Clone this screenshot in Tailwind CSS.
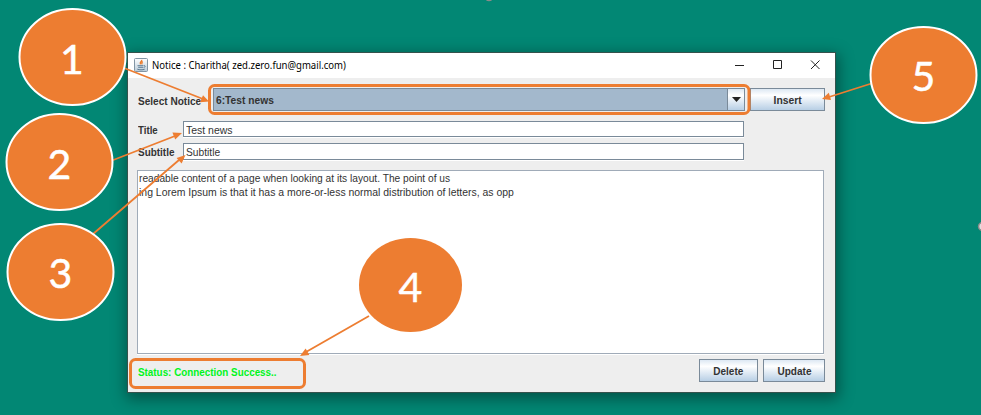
<!DOCTYPE html>
<html lang="en">
<head>
<meta charset="utf-8">
<title>Notice</title>
<script src="https://cdn.jsdelivr.net/npm/@tailwindcss/browser@4"></script>
</head>
<body class="relative w-[981px] h-[415px] overflow-hidden bg-[#028774] font-['Liberation_Sans',Arial,sans-serif] text-[11.5px] leading-[14px] text-[#333]">

<!-- Application window -->
<main class="absolute left-[127px] top-[52px] w-[709px] h-[341px] border border-[#35524c] bg-[#eee] flex flex-col shadow-[1px_4px_14px_2px_rgba(0,0,0,0.38)]">
  <header class="h-[25px] shrink-0 bg-white flex items-center pl-[6px] pb-px text-black">
    <svg class="w-[14px] h-[14px] shrink-0" viewBox="0 0 14 14" fill="none">
      <defs><linearGradient id="ico" x1="0" y1="0" x2="0" y2="1"><stop offset="0" stop-color="#fff"/><stop offset="1" stop-color="#b9cbd9"/></linearGradient></defs>
      <rect x=".5" y=".5" width="13" height="13" rx="1" fill="url(#ico)" stroke="#8295a4"/>
      <path d="M7.600 1.800C8.600 3.300 5 4 6.500 6.300M8.800 3.600C7 4.500 8.500 5 7.600 6.400" stroke="#ec7a28" stroke-width="1.3"/>
      <path d="M3.500 7.700h6M4.200 9.300h4.800M10 7.600c1.800-.2 1.400 1.600-.4 2M3.300 11.200c2 .8 5.400.8 7.400 0" stroke="#5f7d94"/>
    </svg>
    <h1 class="ml-[4px] font-['Noto_Sans',sans-serif] text-[11.5px] origin-left scale-x-[.83] whitespace-pre">Notice : Charitha( zed.zero.fun@gmail.com)</h1>
    <div class="ml-auto flex items-center gap-[28px] pr-[15px]">
      <svg class="w-[10px] h-[10px]" viewBox="0 0 10 10"><path d="M1 5.500h9" stroke="#222"/></svg>
      <svg class="w-[10px] h-[10px]" viewBox="0 0 10 10"><path d="M1.500 .5h8v8h-8z" fill="none" stroke="#222"/></svg>
      <svg class="w-[10px] h-[10px]" viewBox="0 0 10 10"><path d="M1 .5l8.500 8.500M9.500 .5L1 9" stroke="#222"/></svg>
    </div>
  </header>

  <section class="flex flex-col pt-[10px] pl-[9px] pr-[9px]">
    <div class="flex items-center h-[23px] pl-px">
      <label class="w-[75px] pt-[2px] font-bold whitespace-nowrap"><span class="inline-block origin-left scale-x-[.875]">Select Notice</span></label>
      <div class="w-[532px] h-[23px] border border-[#7a8a99] bg-[#a3b8cc] flex">
        <span class="flex-1 pl-[2px] pt-[4px] font-bold"><span class="inline-block origin-left scale-x-[.89]">6:Test news</span></span>
        <span class="w-[17px] border-l border-[#7a8a99] bg-linear-to-b from-[#dde8f3] via-white via-30% to-[#b8cfe5] flex items-center justify-center">
          <svg class="w-[9px] h-[5px]" viewBox="0 0 10 5" preserveAspectRatio="none"><path d="M0 0h10L5 5z" fill="#222"/></svg>
        </span>
      </div>
      <button class="ml-[5px] w-[75px] h-[23px] border border-[#7a8a99] bg-linear-to-b from-[#dde8f3] via-white via-30% to-[#b8cfe5] font-bold"><span class="inline-block scale-x-[.9]">Insert</span></button>
    </div>
    <div class="mt-[10px] flex items-center h-[16px] pl-px">
      <label class="w-[45px] pt-[2px] font-bold"><span class="inline-block origin-left scale-x-[.84]">Title</span></label>
      <div class="w-[561px] h-[16px] border border-[#7a8a99] bg-white pl-[1.5px] pt-px shadow-[0_1px_0_#fff]"><span class="inline-block origin-left scale-x-[.91]">Test news</span></div>
    </div>
    <div class="mt-[6px] flex items-center h-[17px] pl-px">
      <label class="w-[45px] font-bold"><span class="inline-block origin-left scale-x-[.865]">Subtitle</span></label>
      <div class="w-[561px] h-[17px] border border-[#7a8a99] bg-white pl-[1.5px] pt-px shadow-[0_1px_0_#fff]"><span class="inline-block origin-left scale-x-[.89]">Subtitle</span></div>
    </div>
    <div class="mt-[10px] w-[687px] h-[184px] border border-[#a0abb8] bg-white pl-[.5px] pt-px leading-[13.500px] whitespace-nowrap shadow-[0_1px_0_#fff]">
      <p class="w-fit origin-left scale-x-[.887]">readable content of a page when looking at its layout. The point of us</p>
      <p class="w-fit origin-left scale-x-[.908]">ing Lorem Ipsum is that it has a more-or-less normal distribution of letters, as opp</p>
    </div>
  </section>

  <footer class="flex items-center pt-[5px] pl-[10px] pr-[10px] font-bold">
    <span class="pt-[2px] text-[#00f51c]"><span class="inline-block origin-left scale-x-[.857] whitespace-nowrap">Status: Connection Success..</span></span>
    <button class="ml-auto w-[59px] h-[23px] border border-[#7a8a99] bg-linear-to-b from-[#dde8f3] via-white via-30% to-[#b8cfe5]"><span class="inline-block scale-x-[.87]">Delete</span></button>
    <button class="ml-[5px] w-[62px] h-[23px] border border-[#7a8a99] bg-linear-to-b from-[#dde8f3] via-white via-30% to-[#b8cfe5]"><span class="inline-block scale-x-[.87]">Update</span></button>
  </footer>
</main>

<!-- Callouts over the window -->
<svg class="absolute inset-0 w-[981px] h-[415px]" viewBox="0 0 981 415" fill="none">
  <g stroke="#ed7d31" stroke-width="3">
    <rect x="209.500" y="85.500" width="539.500" height="28" rx="5"/>
    <rect x="130.500" y="359.500" width="174" height="28" rx="5"/>
  </g>
  <g stroke="#ed7d31" stroke-width="1.8">
    <path d="M124 68L203 99M112 160.500L175 136M93 234L179 160M369 316L306 352M873 83L829 97"/>
  </g>
  <g fill="#ed7d31">
    <path d="M209 101.500L200 102.200L203 95.200z"/>
    <path d="M182 133L175.200 139.500L172.400 132.500z"/>
    <path d="M185.500 155L181.600 163.600L176.600 157.900z"/>
    <path d="M300 356L305.600 348.500L309.400 355z"/>
    <path d="M822 99L828.800 92.800L831.100 100z"/>
    <ellipse cx="410.500" cy="285" rx="51.500" ry="47"/>
    <g stroke="#fff" stroke-width="2">
      <ellipse cx="72.500" cy="57" rx="53" ry="48"/>
      <ellipse cx="59.500" cy="162" rx="53" ry="48"/>
      <ellipse cx="60.500" cy="272" rx="53" ry="48"/>
      <ellipse cx="923.500" cy="75" rx="53" ry="48"/>
    </g>
  </g>
  <g fill="#fff" stroke="#fff" stroke-width=".5" font-family="Lato, sans-serif" font-size="41" text-anchor="middle">
    <text x="72" y="73.500">1</text>
    <text x="59.500" y="178.500">2</text>
    <text x="60.500" y="288">3</text>
    <text x="410.500" y="301.500">4</text>
    <text x="923.500" y="91">5</text>
  </g>
  <g fill="#ddd" stroke="#8a8a8a" stroke-width="1.500">
    <circle cx="489" cy="-3.500" r="4"/>
    <circle cx="982.500" cy="226.500" r="4"/>
  </g>
</svg>
</body>
</html>
